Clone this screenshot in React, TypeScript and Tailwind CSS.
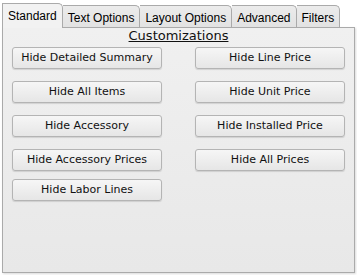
import React from "react";

const tabs = ["Standard", "Text Options", "Layout Options", "Advanced", "Filters"];

const left = ["Hide Detailed Summary", "Hide All Items", "Hide Accessory", "Hide Accessory Prices", "Hide Labor Lines"];
const right = ["Hide Line Price", "Hide Unit Price", "Hide Installed Price", "Hide All Prices"];

function Btn({ label, className = "" }: { label: string; className?: string }) {
  return (
    <button
      className={
        "w-[150px] h-[22px] rounded-[3px] border border-[#b4b4b4] bg-gradient-to-b from-[#f6f6f6] to-[#e6e6e6] text-[11px] text-[#111] shadow-[0_1px_1px_rgba(0,0,0,0.12)] " +
        className
      }
      style={{ fontFamily: '"DejaVu Sans", Verdana, sans-serif' }}
    >
      {label}
    </button>
  );
}

export default function App() {
  return (
    <div className="w-[357px] h-[275px] bg-white pl-[2px] pt-[2px]" style={{ fontFamily: '"Liberation Sans", Arial, sans-serif' }}>
      {/* Tabs */}
      <div className="flex items-end h-[25px]">
        {tabs.map((t, i) => (
          <div
            key={t}
            className={
              i === 0
                ? "h-[25px] px-[5px] pt-[3px] border border-b-0 border-[#aaa] rounded-tr-[5px] bg-[#f2f2f2] text-[12px] text-[#000] relative z-10 -mb-px"
                : "h-[22px] px-[5px] pt-[3px] border border-b-0 border-l-0 border-[#aaa] rounded-tr-[5px] bg-gradient-to-b from-[#ececec] to-[#e2e2e2] text-[12px] text-[#000]"
            }
          >
            {t}
          </div>
        ))}
      </div>

      {/* Panel */}
      <div className="w-[353px] h-[246px] border border-[#aaa] bg-gradient-to-b from-[#f0f0f0] to-[#e8e8e8] shadow-[1px_1px_2px_rgba(0,0,0,0.15)]">
        <div
          className="text-center text-[13px] leading-[15px] underline text-[#111]"
          style={{ fontFamily: '"DejaVu Sans", Verdana, sans-serif' }}
        >
          Customizations
        </div>
        <div className="flex gap-[33px] pl-[9px] pt-[4px]">
          <div className="flex flex-col gap-[12px]">
            {left.map((l, i) => (
              <Btn key={l} label={l} className={i === 4 ? "-mt-[4px]" : ""} />
            ))}
          </div>
          <div className="flex flex-col gap-[12px]">
            {right.map((r) => (
              <Btn key={r} label={r} />
            ))}
          </div>
        </div>
      </div>
    </div>
  );
}
